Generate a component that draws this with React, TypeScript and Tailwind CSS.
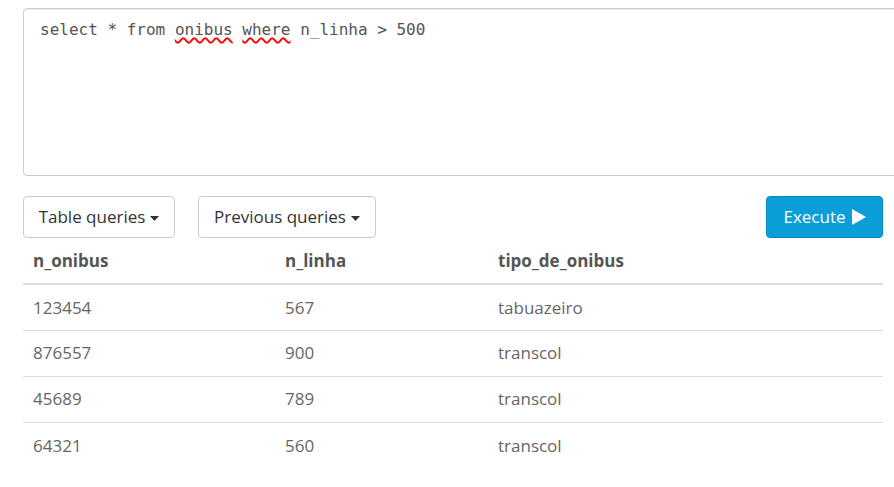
import React from "react";

const rows = [
  ["123454", "567", "tabuazeiro"],
  ["876557", "900", "transcol"],
  ["45689", "789", "transcol"],
  ["64321", "560", "transcol"],
];

function Caret() {
  return (
    <svg width="9" height="5" viewBox="0 0 9 5" className="ml-[5px] mt-[2px]">
      <path d="M0 0 L9 0 L4.5 5 Z" fill="#333" />
    </svg>
  );
}

export default function App() {
  return (
    <div
      className="bg-white w-[894px] h-[487px] overflow-hidden pt-[8px] pl-[23px] pr-[11px] text-[#555]"
      style={{ fontFamily: '"Open Sans", "Liberation Sans", sans-serif' }}
    >
      <div className="h-[168px] mr-[-40px] border border-[#ccc] rounded-l-[4px] pl-[16px] pt-[9px] shadow-[inset_0_1px_1px_rgba(0,0,0,0.075)]">
        <div
          className="text-[16px] leading-[24px] text-[#555]"
          style={{ fontFamily: '"DejaVu Sans Mono", monospace' }}
        >
          select * from{" "}
          <span className="underline decoration-wavy decoration-[#f00] decoration-[1.5px] underline-offset-[2px]">onibus</span>{" "}
          <span className="underline decoration-wavy decoration-[#f00] decoration-[1.5px] underline-offset-[2px]">where</span>{" "}
          n_linha &gt; 500
        </div>
      </div>

      <div className="mt-[20px] flex items-center h-[42px]">
        <button className="h-[42px] w-[152px] border border-[#ccc] rounded-[4px] bg-white flex items-center justify-center text-[17px] text-[#333]">
          Table queries
          <Caret />
        </button>
        <button className="ml-[23px] h-[42px] w-[178px] border border-[#ccc] rounded-[4px] bg-white flex items-center justify-center text-[17px] text-[#333]">
          Previous queries
          <Caret />
        </button>
        <button className="ml-auto h-[42px] w-[117px] border border-[#0389bf] rounded-[4px] bg-[#0a9fd9] flex items-center justify-center text-[17px] text-white">
          Execute
          <svg width="14" height="16" viewBox="0 0 14 16" className="ml-[6px]">
            <path d="M0 0 L14 8 L0 16 Z" fill="#fff" />
          </svg>
        </button>
      </div>

      <table className="w-full border-collapse text-[17px]">
        <thead>
          <tr className="h-[46px] border-b-2 border-[#ddd]">
            <th className="w-[252px] text-left font-bold pl-[10px] text-[#555]">n_onibus</th>
            <th className="w-[213px] text-left font-bold pl-[10px] text-[#555]">n_linha</th>
            <th className="text-left font-bold pl-[10px] text-[#555]">tipo_de_onibus</th>
          </tr>
        </thead>
        <tbody>
          {rows.map((r, i) => (
            <tr key={i} className={`h-[46px] ${i < rows.length - 1 ? "border-b border-[#ddd]" : ""}`}>
              {r.map((c, j) => (
                <td key={j} className="pl-[10px] text-[#666]">
                  {c}
                </td>
              ))}
            </tr>
          ))}
        </tbody>
      </table>
    </div>
  );
}
